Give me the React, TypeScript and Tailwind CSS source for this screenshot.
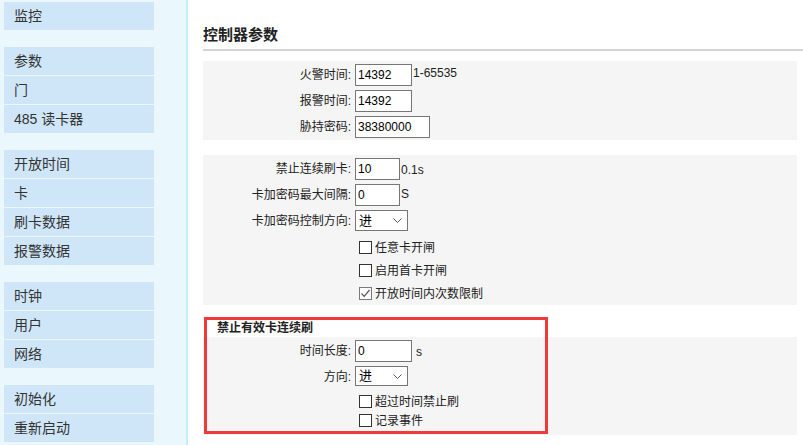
import React from "react";

const navGroups: string[][] = [
  ["监控"],
  ["参数", "门", "485 读卡器"],
  ["开放时间", "卡", "刷卡数据", "报警数据"],
  ["时钟", "用户", "网络"],
  ["初始化", "重新启动"],
];

const TextBox: React.FC<{ value: string; w: string }> = ({ value, w }) => (
  <input
    readOnly
    value={value}
    className={`h-[22px] ${w} border border-[#767676] bg-white px-[2px] text-[12px] text-black outline-none`}
  />
);

const Dropdown: React.FC<{ h: string }> = ({ h }) => (
  <div className={`${h} flex w-[53px] items-center justify-between border border-[#767676] bg-white pl-[3px] pr-[5px] text-[13px] text-black`}>
    <span>进</span>
    <svg width="9" height="5" viewBox="0 0 9 5" fill="none">
      <path d="M0.5 0.5 L4.5 4.5 L8.5 0.5" stroke="#555" strokeWidth="1" />
    </svg>
  </div>
);

const Check: React.FC<{ label: string; checked?: boolean; h: string }> = ({ label, checked, h }) => (
  <div className={`${h} flex items-center pl-[156px]`}>
    <div
      className={`flex h-[13px] w-[13px] items-center justify-center border bg-white ${
        checked ? "border-[#7a7a7a]" : "border-[#333]"
      }`}
    >
      {checked && (
        <svg width="11" height="11" viewBox="0 0 11 11" fill="none">
          <path d="M1.5 5.5 L4.2 8.3 L9.5 2" stroke="#555" strokeWidth="1.2" />
        </svg>
      )}
    </div>
    <span className="ml-[3px] text-[12px] text-[#222]">{label}</span>
  </div>
);

const Row: React.FC<{ label: string; children: React.ReactNode }> = ({ label, children }) => (
  <div className="flex items-start">
    <div className="flex h-[22px] w-[148px] items-center justify-end text-[12px] text-[#222]">{label}:</div>
    <div className="ml-[4px] flex items-start">{children}</div>
  </div>
);

const App: React.FC = () => {
  return (
    <div className="flex h-[445px] w-[803px] overflow-hidden bg-white font-['Liberation_Sans','Noto_Sans_CJK_SC',sans-serif]">
      {/* 左侧菜单 */}
      <div className="flex h-full w-[188px] shrink-0 flex-col gap-[17px] border-r-2 border-[#bfeef8] bg-[#eaf8fe] pl-[4px] pt-[2px]">
        {navGroups.map((group, gi) => (
          <div key={gi} className="flex flex-col gap-[1px]">
            {group.map((name) => (
              <div key={name} className="flex h-[28px] w-[150px] items-center bg-[#cfe6f9] pl-[10px] text-[14px] text-[#333]">
                {name}
              </div>
            ))}
          </div>
        ))}
      </div>

      {/* 内容 */}
      <div className="flex flex-1 flex-col pl-[15px]">
        <div className="mt-[25px] h-[20px] text-[15px] font-bold leading-[20px] text-[#222]">控制器参数</div>
        <div className="mt-[4px] border-t-2 border-[#d4d4d4]" />

        <div className="mr-[6px] mt-[10px] flex flex-col gap-[4px] bg-[#f5f5f5] pb-[2px] pt-[3px]">
          <Row label="火警时间">
            <TextBox value="14392" w="w-[57px]" />
            <span className="ml-[1px] mt-[2px] text-[12px] leading-[14px] text-[#222]">1-65535</span>
          </Row>
          <Row label="报警时间">
            <TextBox value="14392" w="w-[57px]" />
          </Row>
          <Row label="胁持密码">
            <TextBox value="38380000" w="w-[75px]" />
          </Row>
        </div>

        <div className="mr-[6px] mt-[15px] flex flex-col bg-[#f5f5f5] pt-[3px]">
          <div className="flex flex-col gap-[4px]">
            <Row label="禁止连续刷卡">
              <TextBox value="10" w="w-[45px]" />
              <span className="ml-[1px] mt-[5px] text-[12px] leading-[14px] text-[#222]">0.1s</span>
            </Row>
            <Row label="卡加密码最大间隔">
              <TextBox value="0" w="w-[45px]" />
              <span className="ml-[1px] mt-[3px] text-[12px] leading-[14px] text-[#222]">S</span>
            </Row>
            <Row label="卡加密码控制方向">
              <Dropdown h="h-[21px]" />
            </Row>
          </div>
          <div className="mt-[4px] flex flex-col">
            <Check label="任意卡开闸" h="h-[23px]" />
            <Check label="启用首卡开闸" h="h-[23px]" />
            <Check label="开放时间内次数限制" checked h="h-[23px]" />
          </div>
        </div>

        <div className="relative mt-[14px]">
          <div className="flex h-[18px] items-center pl-[14px] text-[12px] font-bold text-[#222]">禁止有效卡连续刷</div>
          <div className="mr-[6px] flex flex-col bg-[#f5f5f5] pb-[5px] pt-[3px]">
            <div className="flex flex-col gap-[4px]">
              <Row label="时间长度">
                <TextBox value="0" w="w-[57px]" />
                <span className="ml-[4px] mt-[5px] text-[12px] leading-[14px] text-[#222]">s</span>
              </Row>
              <Row label="方向">
                <Dropdown h="h-[20px]" />
              </Row>
            </div>
            <div className="mt-[4px] flex flex-col">
              <Check label="超过时间禁止刷" h="h-[19px]" />
              <Check label="记录事件" h="h-[19px]" />
            </div>
          </div>
          {/* 标注框 */}
          <div className="pointer-events-none absolute left-[1px] top-[-2px] h-[117px] w-[344px] border-[3px] border-[#f03a3a]" />
        </div>
      </div>
    </div>
  );
};

export default App;
